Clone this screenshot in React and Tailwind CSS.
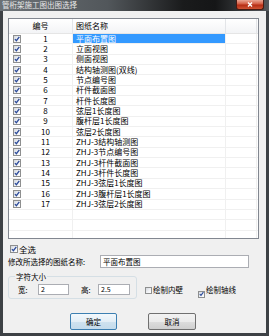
const rows = [
  ['1', '平面布置图'],
  ['2', '立面视图'],
  ['3', '侧面视图'],
  ['4', '结构轴测图(双线)'],
  ['5', '节点编号图'],
  ['6', '杆件截面图'],
  ['7', '杆件长度图'],
  ['8', '弦层1长度图'],
  ['9', '腹杆层1长度图'],
  ['10', '弦层2长度图'],
  ['11', 'ZHJ-3结构轴测图'],
  ['12', 'ZHJ-3节点编号图'],
  ['13', 'ZHJ-3杆件截面图'],
  ['14', 'ZHJ-3杆件长度图'],
  ['15', 'ZHJ-3弦层1长度图'],
  ['16', 'ZHJ-3腹杆层1长度图'],
  ['17', 'ZHJ-3弦层2长度图'],
];

function Check({ checked = true, size = 8 }) {
  const cls =
    size === 8
      ? 'w-[8px] h-[8px]'
      : 'w-[7px] h-[7px]';
  return (
    <span
      className={`${cls} shrink-0 inline-flex items-center justify-center border border-[#8e8f8f] bg-gradient-to-br from-[#d3d7dd] via-[#eef0f3] to-white`}
    >
      {checked && (
        <svg width="6" height="6" viewBox="0 0 6 6">
          <path d="M0.9 3.1 L2.4 4.7 L5.3 0.8" stroke="#2b4a9a" strokeWidth="1.3" fill="none" />
        </svg>
      )}
    </span>
  );
}

export default function App() {
  return (
    <div className="w-[269px] h-[336px] bg-[#3d4145] flex flex-col overflow-hidden font-['Noto_Sans_CJK_SC','Noto_Sans',sans-serif] text-black">
      {/* title bar */}
      <div className="h-[11px] shrink-0 flex items-start bg-[linear-gradient(90deg,#6b7176_0%,#52575b_40%,#1a1b1c_68%,#151617_80%,#55595d_100%)]">
        <span className="text-[7.5px] leading-[9px] text-[#e8e8e8] pl-[2px] whitespace-nowrap">
          管桁架施工图出图选择
        </span>
        <div className="ml-auto mr-[5px] w-[28px] h-[10px] rounded-b-[3px] border border-t-0 border-[#4a1a12] bg-[linear-gradient(180deg,#e9a694_0%,#d35a40_45%,#b52c14_55%,#cf5333_100%)] flex items-center justify-center">
          <svg width="6" height="5" viewBox="0 0 6 5">
            <path d="M1 0.5 L5 4.5 M5 0.5 L1 4.5" stroke="white" strokeWidth="1.4" />
          </svg>
        </div>
      </div>

      {/* client */}
      <div className="flex-1 mx-[3px] mb-[3px] bg-[#f0f0f0] flex flex-col pt-[7px]">
        {/* list */}
        <div className="ml-[5px] w-[251px] h-[221px] shrink-0 border border-[#828790] bg-white overflow-hidden">
          <div className="h-[15px] flex border-b border-[#e5e5e5] bg-gradient-to-b from-white to-[#f3f4f6] text-[8px] leading-none">
            <div className="w-[64px] border-r border-[#e3e5e8] flex items-center justify-center">编号</div>
            <div className="w-[153px] border-r border-[#e3e5e8] flex items-center pl-[3px]">图纸名称</div>
            <div className="w-[31px] border-r border-[#e3e5e8]"></div>
          </div>
          {rows.map(([n, name], i) => (
            <div key={n} className="h-[10.35px] flex border-b border-[#f0f0f0] text-[8px] leading-none">
              <div className="w-[64px] border-r border-[#f0f0f0] flex items-center pl-[4px]">
                <Check />
                <span className="flex-1 text-center pr-[2px]">{n}</span>
              </div>
              <div
                className={`w-[153px] border-r border-[#f0f0f0] flex items-center pl-[3px] whitespace-nowrap ${
                  i === 0 ? 'bg-[#3399ff] text-white' : ''
                }`}
              >
                {name}
              </div>
              <div className="w-[31px] border-r border-[#f0f0f0]"></div>
            </div>
          ))}
          {[0, 1, 2].map((k) => (
            <div key={'e' + k} className="h-[10.35px] flex border-b border-[#f0f0f0]">
              <div className="w-[64px] border-r border-[#f0f0f0]"></div>
              <div className="w-[153px] border-r border-[#f0f0f0]"></div>
              <div className="w-[31px] border-r border-[#f0f0f0]"></div>
            </div>
          ))}
        </div>

        {/* select all */}
        <div className="mt-[6px] ml-[7px] h-[8px] flex items-center gap-[1px]">
          <Check />
          <span className="text-[8.5px] leading-none">全选</span>
        </div>

        {/* rename */}
        <div className="mt-[2px] h-[13px] flex items-center">
          <span className="ml-[5px] w-[92px] text-[7.5px] leading-none whitespace-nowrap">修改所选择的图纸名称:</span>
          <div className="w-[149px] h-[13px] border border-[#abadb3] bg-white flex items-center pl-[2px] text-[7.5px] leading-none">
            平面布置图
          </div>
        </div>

        {/* group box row */}
        <div className="mt-[8px] flex items-start">
          <div className="ml-[5px] w-[129px] h-[23px] border border-[#d5dfe5] rounded-[3px] relative flex items-start pt-[7px]">
            <span className="absolute -top-[5px] left-[6px] px-[1px] bg-[#f0f0f0] text-[7.5px] leading-[9px]">字符大小</span>
            <span className="ml-[9px] w-[20px] text-[7.5px] leading-[11px]">宽:</span>
            <div className="w-[31px] h-[11px] border border-[#abadb3] bg-white text-[7px] leading-[9px] pl-[2px]">2</div>
            <span className="ml-[12px] w-[17px] text-[7.5px] leading-[11px]">高:</span>
            <div className="w-[32px] h-[11px] border border-[#abadb3] bg-white text-[7px] leading-[9px] pl-[2px]">2.5</div>
          </div>
          <div className="ml-[8px] mt-[2px] flex items-center">
            <Check checked={false} size={7} />
            <span className="ml-[1px] text-[7.5px] leading-none">绘制内壁</span>
            <span className="ml-[15px]"><Check size={7} /></span>
            <span className="ml-[1px] text-[7.5px] leading-none">绘制轴线</span>
          </div>
        </div>

        {/* buttons */}
        <div className="mt-[11px] flex">
          <button className="ml-[67px] w-[47px] h-[17px] rounded-[2px] border border-[#3c7fb1] bg-[linear-gradient(180deg,#f2f8fc_0%,#e3eef6_50%,#cfe2ef_51%,#c4dbeb_100%)] text-[7.5px] leading-none flex items-center justify-center">
            确定
          </button>
          <button className="ml-[31px] w-[48px] h-[17px] rounded-[2px] border border-[#707070] bg-[linear-gradient(180deg,#f2f2f2_0%,#ebebeb_50%,#dddddd_51%,#cfcfcf_100%)] text-[7.5px] leading-none flex items-center justify-center">
            取消
          </button>
        </div>
      </div>
    </div>
  );
}
